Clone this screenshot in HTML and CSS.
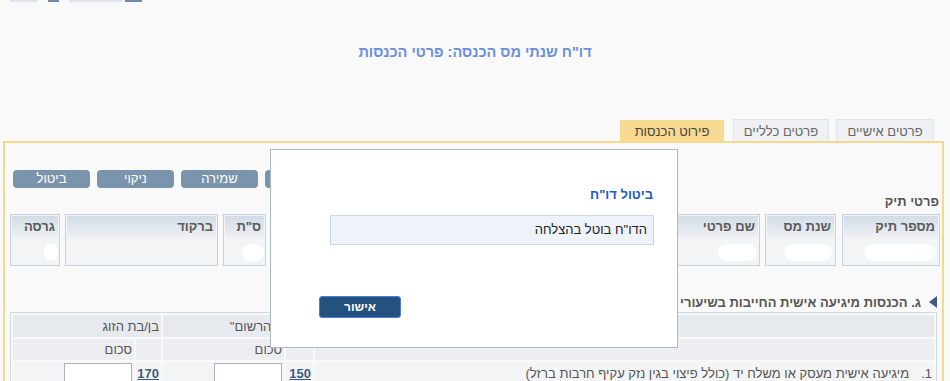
FILE: index.html
```html
<!DOCTYPE html>
<html lang="he" dir="rtl">
<head>
    <meta charset="UTF-8">
    <title>דו"ח שנתי מס הכנסה</title>
    <link rel="stylesheet" href="styles.css">
</head>
<body>
    <div class="topbar">
        <span class="chip light w27"></span>
        <span class="chip dark w11"></span>
        <span class="chip light w53"></span>
        <span class="chip dark w17"></span>
    </div>

    <h1 class="page-title">דו"ח שנתי מס הכנסה: פרטי הכנסות</h1>

    <div class="tabs">
        <div class="tab t1">פרטים אישיים</div>
        <div class="tab t2">פרטים כלליים</div>
        <div class="tab active">פירוט הכנסות</div>
    </div>

    <div class="panel">
        <div class="actions">
            <button class="act">ביטול</button>
            <button class="act">ניקוי</button>
            <button class="act">שמירה</button>
            <button class="act"></button>
        </div>

        <div class="label">פרטי תיק</div>
        <div class="fields">
            <div class="field w98"><div class="fh">מספר תיק</div><div class="fb"><span class="blot b1"></span></div></div>
            <div class="field w71"><div class="fh">שנת מס</div><div class="fb"><span class="blot b2"></span></div></div>
            <div class="field w130"><div class="fh">שם פרטי</div><div class="fb"><span class="blot b3"></span></div></div>
            <div class="field grow"><div class="fh"></div><div class="fb"></div></div>
            <div class="field w43"><div class="fh">ס"ת</div><div class="fb"><span class="blot b4"></span></div></div>
            <div class="field w153"><div class="fh">ברקוד</div><div class="fb"></div></div>
            <div class="field w50"><div class="fh">גרסה</div><div class="fb"><span class="blot b5"></span></div></div>
        </div>

        <div class="section"><span class="arrow"></span>ג. הכנסות מיגיעה אישית החייבות בשיעורי מס רגילים</div>

        <table class="grid">
            <colgroup>
                <col>
                <col class="k-code">
                <col class="k-sum">
                <col class="k-code2">
                <col class="k-sum">
            </colgroup>
            <tr class="r1">
                <th></th>
                <th colspan="2">בן הזוג הרשום"</th>
                <th colspan="2">בן/בת הזוג</th>
            </tr>
            <tr class="r2">
                <th></th>
                <th></th>
                <th>סכום</th>
                <th></th>
                <th>סכום</th>
            </tr>
            <tr class="r3">
                <td><span class="num">1.</span>מיגיעה אישית מעסק או משלח יד (כולל פיצוי בגין נזק עקיף חרבות ברזל)</td>
                <td><a href="#">150</a></td>
                <td><input type="text" class="amt"></td>
                <td><a href="#">170</a></td>
                <td><input type="text" class="amt"></td>
            </tr>
        </table>
    </div>

    <div class="dialog">
        <div class="dlg-title">ביטול דו"ח</div>
        <div class="dlg-msg">הדו"ח בוטל בהצלחה</div>
        <div class="dlg-foot">
            <button class="ok">אישור</button>
        </div>
    </div>
</body>
</html>
```

FILE: styles.css
```css
body {
    margin: 0;
    background-color: #f9f9f9;
    font-family: "Liberation Sans", Arial, sans-serif;
    color: #555;
    height: 381px;
    overflow: hidden;
    position: relative;
}

.topbar {
    direction: ltr;
    display: flex;
    height: 3px;
    padding-left: 10px;
}

.chip {
    height: 2px;
    margin-right: 8px;
}

.chip.light { background-color: #dde4ee; }
.chip.dark { background-color: #6f8aa8; }
.w27 { width: 27px; }
.w11 { width: 11px; margin-left: 3px; }
.w53 { width: 53px; margin-left: 2px; margin-right: 3px; }
.w17 { width: 17px; }

.page-title {
    margin: 41px 0 0;
    text-align: center;
    font-size: 14.5px;
    line-height: 16px;
    font-weight: bold;
    color: #6b8fe0;
}

.tabs {
    display: flex;
    align-items: flex-end;
    height: 22px;
    margin-top: 59px;
    padding-right: 16px;
}

.tab {
    height: 22px;
    line-height: 24px;
    box-sizing: border-box;
    background-color: #eef0f3;
    border: 1px solid #e0e5ec;
    border-bottom: none;
    font-size: 13px;
    color: #666;
    text-align: center;
}

.t1 { width: 98px; margin-left: 7px; }
.t2 { width: 96px; margin-left: 9px; }

.tab.active {
    width: 104px;
    height: 21px;
    line-height: 22px;
    background-color: #f7d98f;
    border-color: #f7d98f;
    color: #444;
}

.panel {
    margin: 0 6px 0 3px;
    border: 2px solid #f6d88d;
    border-bottom: none;
    height: 260px;
}

.actions {
    direction: ltr;
    display: flex;
    gap: 7px;
    padding: 27px 0 0 8px;
}

.act {
    width: 77px;
    height: 18px;
    padding: 0;
    border: none;
    border-radius: 4px;
    background-color: #7a95ab;
    color: #fff;
    font-family: inherit;
    font-size: 13px;
    line-height: 18px;
}

.label {
    margin-top: 7px;
    padding-right: 3px;
    font-size: 13px;
    line-height: 14px;
    font-weight: bold;
    color: #555;
}

.fields {
    display: flex;
    gap: 5px;
    margin-top: 5px;
    padding: 0 2px 0 5px;
}

.field {
    height: 52px;
    box-sizing: border-box;
    border: 1px solid #c5d2df;
    padding: 1px;
    background-color: #f3f4f6;
}

.w98 { width: 98px; margin-left: 1px; }
.w71 { width: 71px; }
.w130 { width: 130px; }
.w43 { width: 43px; }
.w153 { width: 153px; }
.w50 { width: 50px; }
.grow { flex: 1; }

.fh {
    height: 22px;
    line-height: 22px;
    padding-right: 3px;
    background: linear-gradient(#d3dce6, #eef1f5);
    font-size: 13px;
    font-weight: bold;
    color: #5a5a5a;
    white-space: nowrap;
    overflow: hidden;
}

.fb {
    height: 26px;
    position: relative;
}

.blot {
    position: absolute;
    top: 6px;
    right: 2px;
    height: 17px;
    background-color: #fff;
    border-radius: 9px;
}

.b1 { width: 72px; }
.b2 { width: 48px; }
.b3 { width: 38px; }
.b4 { width: 22px; right: 0; }
.b5 { width: 14px; right: 0; }

.section {
    margin-top: 30px;
    padding-right: 5px;
    font-size: 13px;
    line-height: 14px;
    font-weight: bold;
    color: #555;
    white-space: nowrap;
}

.arrow {
    display: inline-block;
    width: 0;
    height: 0;
    border-top: 6px solid transparent;
    border-bottom: 6px solid transparent;
    border-right: 8px solid #3e5a80;
    margin-left: 8px;
    vertical-align: -1px;
}

.grid {
    margin: 2px 5px 0 0;
    width: 927px;
    table-layout: fixed;
    border: 1px solid #d0d8e2;
    border-spacing: 2px;
    font-size: 13px;
}

.k-code { width: 27px; }
.k-code2 { width: 25px; }
.k-sum { width: 121px; }

.grid th,
.grid td {
    padding: 0 2px;
    text-align: right;
    font-weight: normal;
    color: #555;
    white-space: nowrap;
    overflow: hidden;
}

.r1 th { height: 22px; background-color: #e6e9ee; }
.r2 th { height: 21px; background-color: #eceef2; }
.r3 td { height: 22px; background-color: #f3f4f6; }

.num {
    margin-left: 12px;
}

.grid a {
    color: #3e5a80;
    font-weight: bold;
}

.amt {
    width: 62px;
    height: 17px;
    margin-left: 1px;
    border: 1px solid #a9b2bd;
    background-color: #fff;
    vertical-align: bottom;
}

.dialog {
    position: absolute;
    left: 270px;
    top: 149px;
    width: 406px;
    height: 197px;
    background-color: #fff;
    border: 1px solid #a9b9cc;
}

.dlg-title {
    padding: 37px 24px 0 0;
    font-size: 13px;
    line-height: 16px;
    font-weight: bold;
    color: #1d58cf;
}

.dlg-msg {
    margin: 12px 23px 0 0;
    height: 28px;
    line-height: 28px;
    padding-right: 6px;
    width: 316px;
    background-color: #eef3fa;
    border: 1px solid #c8d6e8;
    font-size: 13px;
    color: #222;
}

.dlg-foot {
    display: flex;
    justify-content: flex-end;
    padding-left: 48px;
    margin-top: 51px;
}

.ok {
    width: 82px;
    height: 22px;
    padding: 0;
    border: 1px solid #4a7fe0;
    border-radius: 3px;
    background-color: #25517f;
    color: #fff;
    font-family: inherit;
    font-size: 12px;
    font-weight: bold;
}
```
